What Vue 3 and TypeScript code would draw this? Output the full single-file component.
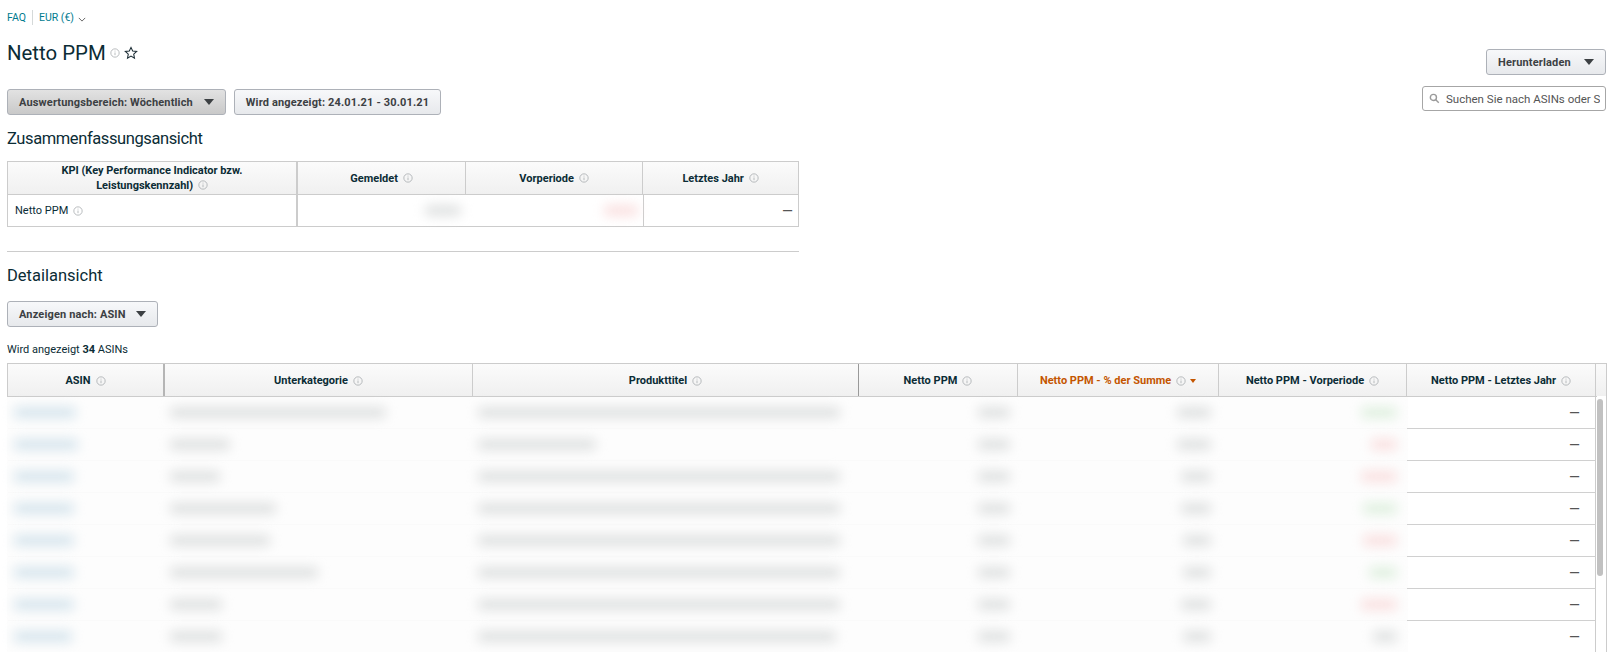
<script setup lang="ts">
interface Row {
  asin: number
  sub: number
  title: number
  ppm: number
  share: number
  prev: number
  tone: string
}

const rows: Row[] = [
  { asin: 62, sub: 216, title: 362, ppm: 32, share: 34, prev: 36, tone: 'green' },
  { asin: 64, sub: 60, title: 118, ppm: 32, share: 34, prev: 26, tone: 'red' },
  { asin: 60, sub: 50, title: 362, ppm: 32, share: 30, prev: 36, tone: 'red' },
  { asin: 60, sub: 106, title: 362, ppm: 32, share: 30, prev: 34, tone: 'green' },
  { asin: 60, sub: 100, title: 362, ppm: 32, share: 28, prev: 34, tone: 'red' },
  { asin: 60, sub: 148, title: 362, ppm: 32, share: 28, prev: 28, tone: 'green' },
  { asin: 60, sub: 52, title: 362, ppm: 32, share: 30, prev: 36, tone: 'red' },
  { asin: 58, sub: 52, title: 358, ppm: 32, share: 28, prev: 24, tone: 'gray' }
]

const summaryColumns = ['Gemeldet', 'Vorperiode', 'Letztes Jahr']
</script>

<template>
  <main class="page">
    <nav class="top-links">
      <a class="link">FAQ</a>
      <span class="divider"></span>
      <a class="link">EUR (€)</a>
      <svg class="chevron" viewBox="0 0 10 6" aria-hidden="true"><path d="M1 1l4 4 4-4" /></svg>
    </nav>

    <header class="title-row">
      <div class="title-left">
        <h1>Netto PPM</h1>
        <svg class="info info-title" viewBox="0 0 12 12" aria-hidden="true">
          <circle cx="6" cy="6" r="5" /><path d="M6 5.4v3.2M6 3.2v1" />
        </svg>
        <svg class="star" viewBox="0 0 16 16" aria-hidden="true">
          <path d="M8 1.6l1.9 4.2 4.6.5-3.4 3.1.9 4.5L8 11.6l-4 2.3.9-4.5L1.5 6.3l4.6-.5z" />
        </svg>
      </div>
      <button class="btn btn-download">
        Herunterladen<span class="caret"></span>
      </button>
    </header>

    <section class="controls">
      <div class="control-buttons">
        <button class="btn btn-pressed btn-range">Auswertungsbereich: Wöchentlich<span class="caret"></span></button>
        <button class="btn btn-date">Wird angezeigt: 24.01.21 - 30.01.21</button>
      </div>
      <label class="search">
        <svg viewBox="0 0 14 14" aria-hidden="true"><circle cx="5.6" cy="5.6" r="3.9" /><path d="M8.6 8.6l3.8 3.8" /></svg>
        <span class="search-text">Suchen Sie nach ASINs oder S</span>
      </label>
    </section>

    <h2 class="summary-heading">Zusammenfassungsansicht</h2>

    <section class="summary">
      <div class="sum-head">
        <div class="sum-th sum-kpi">
          <span>KPI (Key Performance Indicator bzw.<br />Leistungskennzahl)
            <svg class="info" viewBox="0 0 12 12" aria-hidden="true"><circle cx="6" cy="6" r="5" /><path d="M6 5.4v3.2M6 3.2v1" /></svg>
          </span>
        </div>
        <div v-for="c in summaryColumns" :key="c" class="sum-th">
          <span>{{ c }}
            <svg class="info" viewBox="0 0 12 12" aria-hidden="true"><circle cx="6" cy="6" r="5" /><path d="M6 5.4v3.2M6 3.2v1" /></svg>
          </span>
        </div>
      </div>
      <div class="sum-body">
        <div class="sum-td sum-name">
          Netto PPM
          <svg class="info" viewBox="0 0 12 12" aria-hidden="true"><circle cx="6" cy="6" r="5" /><path d="M6 5.4v3.2M6 3.2v1" /></svg>
        </div>
        <div class="sum-td sum-blur"><i class="bar gray" style="width: 36px"></i></div>
        <div class="sum-td sum-blur"><i class="bar red" style="width: 34px"></i></div>
        <div class="sum-td sum-dash">—</div>
      </div>
    </section>

    <hr class="rule" />

    <h2 class="detail-heading">Detailansicht</h2>

    <button class="btn btn-view">Anzeigen nach: ASIN<span class="caret"></span></button>

    <p class="count">Wird angezeigt <b>34</b> ASINs</p>

    <section class="detail">
      <div class="det-head">
        <div class="det-th thick">ASIN <svg class="info" viewBox="0 0 12 12" aria-hidden="true"><circle cx="6" cy="6" r="5" /><path d="M6 5.4v3.2M6 3.2v1" /></svg></div>
        <div class="det-th">Unterkategorie <svg class="info" viewBox="0 0 12 12" aria-hidden="true"><circle cx="6" cy="6" r="5" /><path d="M6 5.4v3.2M6 3.2v1" /></svg></div>
        <div class="det-th thick dark">Produkttitel <svg class="info" viewBox="0 0 12 12" aria-hidden="true"><circle cx="6" cy="6" r="5" /><path d="M6 5.4v3.2M6 3.2v1" /></svg></div>
        <div class="det-th">Netto PPM <svg class="info" viewBox="0 0 12 12" aria-hidden="true"><circle cx="6" cy="6" r="5" /><path d="M6 5.4v3.2M6 3.2v1" /></svg></div>
        <div class="det-th sorted">Netto PPM - % der Summe <svg class="info" viewBox="0 0 12 12" aria-hidden="true"><circle cx="6" cy="6" r="5" /><path d="M6 5.4v3.2M6 3.2v1" /></svg><span class="sort-caret"></span></div>
        <div class="det-th">Netto PPM - Vorperiode <svg class="info" viewBox="0 0 12 12" aria-hidden="true"><circle cx="6" cy="6" r="5" /><path d="M6 5.4v3.2M6 3.2v1" /></svg></div>
        <div class="det-th">Netto PPM - Letztes Jahr <svg class="info" viewBox="0 0 12 12" aria-hidden="true"><circle cx="6" cy="6" r="5" /><path d="M6 5.4v3.2M6 3.2v1" /></svg></div>
      </div>
      <div v-for="(r, i) in rows" :key="i" class="det-row">
        <div class="det-td asin"><i class="bar blue" :style="{ width: r.asin + 'px' }"></i></div>
        <div class="det-td sub"><i class="bar gray" :style="{ width: r.sub + 'px' }"></i></div>
        <div class="det-td sub"><i class="bar gray" :style="{ width: r.title + 'px' }"></i></div>
        <div class="det-td right"><i class="bar gray" :style="{ width: r.ppm + 'px' }"></i></div>
        <div class="det-td right"><i class="bar gray" :style="{ width: r.share + 'px' }"></i></div>
        <div class="det-td right prev"><i class="bar" :class="r.tone" :style="{ width: r.prev + 'px' }"></i></div>
        <div class="det-td dash">—</div>
      </div>
      <div class="thumb"></div>
    </section>
  </main>
</template>

<style>
html,
body {
  margin: 0;
  height: 652px;
  overflow: hidden;
  background: #fff;
}
</style>

<style scoped>
.page {
  box-sizing: border-box;
  width: 1616px;
  height: 652px;
  padding: 0 10px 0 7px;
  overflow: hidden;
  font-family: Roboto, "Noto Sans", sans-serif;
  font-size: 11px;
  color: #0b2c35;
}

.top-links {
  display: flex;
  align-items: center;
  height: 15px;
  margin-top: 10px;
  font-size: 10.5px;
}

.link {
  color: #007b8f;
}

.divider {
  width: 1px;
  height: 15px;
  margin: 0 6px;
  background: #d5d9d9;
}

.chevron {
  width: 8px;
  height: 5px;
  margin: 3px 0 0 4px;
  fill: none;
  stroke: #444;
  stroke-width: 1;
}

.title-row {
  display: flex;
  justify-content: space-between;
  align-items: flex-start;
  height: 64px;
}

.title-left {
  display: flex;
  align-items: center;
  height: 28px;
  margin-top: 14px;
}

h1 {
  margin: 0;
  font-size: 20.4px;
  font-weight: 400;
  line-height: 28px;
}

h2 {
  margin: 0;
  font-size: 16.5px;
  font-weight: 400;
  line-height: 22px;
}

.info {
  width: 10px;
  height: 10px;
  margin-left: 2px;
  vertical-align: -1px;
  fill: none;
  stroke: #a3a7ab;
  stroke-width: 0.9;
}

.info-title {
  margin-left: 4px;
}

.star {
  width: 14px;
  height: 14px;
  margin-left: 4px;
  fill: none;
  stroke: #1a2b33;
  stroke-width: 1.2;
}

.btn {
  box-sizing: border-box;
  display: flex;
  align-items: center;
  justify-content: space-between;
  height: 26px;
  padding: 0 11px;
  border: 1px solid #adb1b8;
  border-radius: 3px;
  background: linear-gradient(#f7f8fa, #e7e9ec);
  font-family: inherit;
  font-size: 11px;
  font-weight: 700;
  letter-spacing: 0.15px;
  color: #3c4043;
  white-space: nowrap;
}

.btn-download {
  width: 120px;
  margin-top: 24px;
}

.btn-pressed {
  background: linear-gradient(#e2e2e2, #c9c9c9);
}

.btn-range {
  width: 219px;
}

.btn-date {
  width: 207px;
  justify-content: center;
}

.btn-view {
  width: 151px;
}

.caret {
  width: 0;
  height: 0;
  border-left: 5.5px solid transparent;
  border-right: 5.5px solid transparent;
  border-top: 6px solid #3c4043;
}

.controls {
  display: flex;
  justify-content: space-between;
  align-items: flex-start;
  height: 26px;
}

.control-buttons {
  display: flex;
  gap: 8px;
}

.search {
  box-sizing: border-box;
  display: flex;
  align-items: center;
  width: 184px;
  height: 25px;
  margin-top: -3px;
  padding: 0 4px 0 6px;
  border: 1px solid #a6a6a6;
  border-radius: 3px;
  overflow: hidden;
  font-size: 11.5px;
  color: #555;
}

.search svg {
  flex: none;
  width: 11px;
  height: 11px;
  margin-right: 6px;
  fill: none;
  stroke: #9a9a9a;
  stroke-width: 1.8;
}

.search-text {
  overflow: hidden;
  white-space: nowrap;
}

.summary-heading {
  margin-top: 13px;
  letter-spacing: -0.4px;
}

.summary {
  box-sizing: border-box;
  width: 792px;
  margin-top: 11px;
  border: 1px solid #ccc;
}

.sum-head,
.sum-body {
  display: grid;
  grid-template-columns: 290px 168px 177px 155px;
}

.sum-head {
  height: 32px;
  background: linear-gradient(#fbfbfb, #f0f0f0);
  border-bottom: 1px solid #ccc;
}

.sum-th {
  display: flex;
  align-items: center;
  justify-content: center;
  text-align: center;
  line-height: 15px;
  font-weight: 700;
  border-right: 1px solid #ccc;
}

.sum-th:last-child {
  border-right: 0;
}

.sum-kpi {
  border-right: 2px solid #ccc;
}

.sum-body {
  height: 31px;
}

.sum-td {
  display: flex;
  align-items: center;
}

.sum-name {
  gap: 3px;
  padding-left: 7px;
  border-right: 2px solid #ccc;
}

.sum-blur {
  justify-content: flex-end;
  padding-right: 5px;
}

.sum-dash {
  justify-content: flex-end;
  padding-right: 5px;
  border-left: 1px solid #ccc;
  font-size: 14px;
  color: #555;
}

.rule {
  width: 792px;
  height: 1px;
  margin: 24px 0 0;
  border: 0;
  background: #ccc;
}

.detail-heading {
  margin-top: 13px;
}

.btn-view {
  margin-top: 14px;
}

.count {
  margin: 15px 0 0;
  line-height: 16px;
}

.detail {
  position: relative;
  box-sizing: border-box;
  width: 1600px;
  margin-top: 5px;
  border-top: 1px solid #ccc;
  border-right: 1px solid #ccc;
}

.det-head,
.det-row {
  display: grid;
  grid-template-columns: 157px 308px 386px 159px 201px 188px 189px;
  padding-left: 1px;
}

.det-head {
  position: relative;
  height: 33px;
  box-sizing: border-box;
  padding-left: 0;
  border-left: 1px solid #ccc;
  background: linear-gradient(#fbfbfb 0, #f0f0f0 32px, transparent 32px);
}

.det-head::after {
  content: "";
  position: absolute;
  left: 0;
  bottom: 0;
  width: 1589px;
  height: 1px;
  background: #ccc;
}

.det-th {
  display: flex;
  align-items: center;
  justify-content: center;
  gap: 3px;
  font-weight: 700;
  border-right: 1px solid #ccc;
  white-space: nowrap;
}

.det-th.thick {
  border-right: 2px solid #b5b5b5;
}

.det-th.dark {
  border-right: 1px solid #999;
}

.sorted {
  color: #c45500;
}

.sort-caret {
  width: 0;
  height: 0;
  margin-left: 1px;
  border-left: 3.5px solid transparent;
  border-right: 3.5px solid transparent;
  border-top: 4px solid #c45500;
}

.det-row {
  height: 32px;
  background: linear-gradient(90deg, #fdfdfd 1401px, transparent 1401px);
}

.det-td {
  display: flex;
  align-items: center;
  box-sizing: border-box;
  height: 32px;
  border-bottom: 1px solid #fafafa;
}

.asin {
  padding-left: 6px;
}

.sub {
  padding-left: 5px;
}

.right {
  justify-content: flex-end;
  padding-right: 8px;
}

.prev {
  padding-right: 10px;
}

.dash {
  justify-content: flex-end;
  padding-right: 15px;
  border-bottom-color: #d0d0d0;
  border-right: 1px solid #ccc;
  font-size: 14px;
  color: #555;
}

.bar {
  display: block;
  height: 11px;
  border-radius: 4px;
  filter: blur(6px);
}

.gray {
  background: #dfe1e1;
}

.blue {
  background: #d6e5ed;
}

.green {
  background: #dff0df;
}

.red {
  background: #fae0e0;
}

.thumb {
  position: absolute;
  top: 35px;
  right: 3px;
  width: 6px;
  height: 177px;
  border-radius: 3px;
  background: #c1c1c1;
}
</style>
